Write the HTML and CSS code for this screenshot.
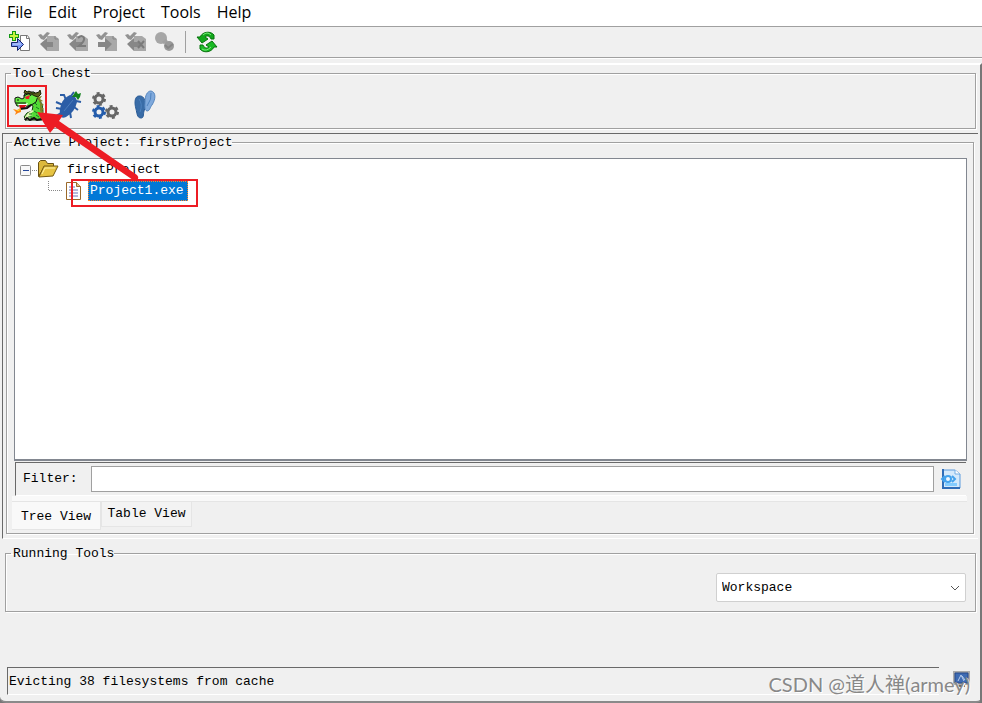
FILE: index.html
```html
<!DOCTYPE html>
<html lang="en">
<head>
    <meta charset="UTF-8" />
    <title>firstProject</title>
    <link rel="stylesheet" href="styles.css">
</head>
<body>
<div class="window">
    <nav class="menu">
        <a href="#">File</a>
        <a href="#">Edit</a>
        <a href="#">Project</a>
        <a href="#">Tools</a>
        <a href="#">Help</a>
    </nav>
    <div class="toolbar">
        <button type="button" aria-label="Import file">
            <svg width="22" height="22" viewBox="0 0 22 22">
                <path d="M11.500 4.500h7l2 3v12h-9z" fill="#fff" stroke="#777"/>
                <path d="M17.500 4.500v3h3" fill="none" stroke="#777"/>
                <path d="M2.500 11.500h6v-4l6 6-6 6v-4h-6z" fill="#7d9cf5" stroke="#14246e"/>
                <path d="M4 13h8" stroke="#c5d5ff"/>
                <path d="M3 0h4v3h3v4H7v3H3V7H0V3h3z" fill="#159a15"/>
                <path d="M4 1h2v3h3v2H6v3H4V6H1V4h3z" fill="#c9f23e"/>
            </svg>
        </button>
        <button type="button" disabled aria-label="Check out">
            <svg width="22" height="22" viewBox="0 0 22 22">
                <path d="M9 5h8l4 3v12H9z" fill="#a8a8a8"/>
                <path d="M17 5v3h3" fill="none" stroke="#868686"/>
                <path d="M2 13l7-6v4h6v5H9v4z" fill="#878787"/>
                <path d="M0 4l3-1 2 2 4-4 3 1-6 7-3-1z" fill="#929292"/>
            </svg>
        </button>
        <button type="button" disabled aria-label="Update">
            <svg width="22" height="22" viewBox="0 0 22 22">
                <path d="M9 5h8l4 3v12H9z" fill="#a8a8a8"/>
                <path d="M2 13l7-6v4h6v5H9v4z" fill="#878787"/>
                <path d="M0 4l3-1 2 2 4-4 3 1-6 7-3-1z" fill="#929292"/>
                <path d="M11 7q4-4 6 0 1 3-5 8h7" fill="none" stroke="#7b7b7b" stroke-width="2"/>
            </svg>
        </button>
        <button type="button" disabled aria-label="Check in">
            <svg width="22" height="22" viewBox="0 0 22 22">
                <path d="M9 5h8l4 3v12H9z" fill="#a8a8a8"/>
                <path d="M17 5v3h3" fill="none" stroke="#868686"/>
                <path d="M2 11h7V7l7 6-7 7v-4H2z" fill="#878787"/>
                <path d="M0 4l3-1 2 2 4-4 3 1-6 7-3-1z" fill="#929292"/>
            </svg>
        </button>
        <button type="button" disabled aria-label="Undo check out">
            <svg width="22" height="22" viewBox="0 0 22 22">
                <path d="M9 5h8l4 3v12H9z" fill="#a8a8a8"/>
                <path d="M2 13l7-6v4h6v5H9v4z" fill="#878787"/>
                <path d="M0 4l3-1 2 2 4-4 3 1-6 7-3-1z" fill="#929292"/>
                <path d="M13 10l6 7m0-7l-6 7" stroke="#7b7b7b" stroke-width="2"/>
            </svg>
        </button>
        <button type="button" disabled aria-label="Find check outs">
            <svg width="22" height="22" viewBox="0 0 22 22">
                <circle cx="7" cy="7" r="6" fill="#a6a6a6"/>
                <path d="M9 12l4-3" stroke="#a0a0a0" stroke-width="3"/>
                <circle cx="15" cy="15" r="5" fill="#999"/>
                <path d="M11 14l3 3 5-4" fill="none" stroke="#858585" stroke-width="2"/>
            </svg>
        </button>
        <span class="divider"></span>
        <button type="button" aria-label="Refresh">
            <svg width="22" height="22" viewBox="0 0 22 22">
                <path d="M4 6C7 0 15 0 18 4l0 4-3 0C14 5 11 4 9 6l3 2-6 4-5-6z" fill="#12a81c" stroke="#07730d"/>
                <path d="M18 16C15 22 7 22 4 18l0-4 3 0c1 3 4 4 6 2l-3-2 6-4 5 6z" fill="#19bb24" stroke="#07730d"/>
                <path d="M7 4q4-4 8 0M6 18q4 3 9-2" fill="none" stroke="#79ee7b"/>
            </svg>
        </button>
    </div>

    <div class="content">
        <fieldset class="group chest">
            <legend>Tool Chest</legend>
            <div class="tools">
                <button type="button" aria-label="CodeBrowser">
                    <svg width="32" height="32" viewBox="0 0 32 32">
                        <path d="M19 8l6 1 4 6 1 7-1 9H12v-2l-1-1 3-4 5-2 1-5-5-3z" fill="#52d936" stroke="#123b0c"/>
                        <path d="M2 9l3-1 4 2 2-1V6l4-3 6 0 4 4-2 6-3 2-5 2-6 2-2-2H4l-2-4z" fill="#63ec43" stroke="#111"/>
                        <path d="M11 4l1-3 2 2 2-1 3 2 4 0 3-1 1-2 1 4-3 3-3-1-4-2-4 0z" fill="#5c5f1b" stroke="#1d2208"/>
                        <path d="M24 8l5-1-2 3 3 2-3 1 4 3-3 1 3 3-2 1 2 4-4-3 0-8z" fill="#7d8429"/>
                        <path d="M5 15l7 0 3-1-2 4-6 1z" fill="#fff"/>
                        <path d="M6 16h8l-3 3-4 1z" fill="#d5101b"/>
                        <path d="M7 20l7-1 4-3" fill="none" stroke="#111" stroke-width="2"/>
                        <path d="M12 8l5-2-1 4-3 0z" fill="#ed1c24"/>
                        <path d="M11 7l5-3 2 3M4 11h2M3 14h5l5 0" fill="none" stroke="#111"/>
                        <path d="M15 24l4-3 2 1-4 3 3 1-4 1 2 2-3 2h-3v-3z" fill="#e6f5b9"/>
                        <path d="M16 25h3m-4 3h4M21 13l3 3M23 18l3 2M21 22l3 2M23 26l3 2" stroke="#16761e"/>
                        <path d="M12 31l2-2 3 2 4-2 3 2 5-1" fill="none" stroke="#111" stroke-width="2"/>
                        <path d="M8 19l-4 2-4-1 3 3-1 3 3-2 3-1z" fill="#ff8614"/>
                        <path d="M7 20l-4 2 3 0z" fill="#ffdd2c"/>
                    </svg>
                </button>
                <button type="button" aria-label="Debugger">
                    <svg width="32" height="32" viewBox="0 0 32 32">
                        <path d="M8 27C7 19 9 10 18 6q7 1 7 7-2 10-11 15-4 2-6-1z" fill="#2b5da6"/>
                        <path d="M14 11L12 6 8 6M11 16L4 13M10 20l-6-1M9 24l-5 3M19 7l3-4M24 12l5 1M22 18l4 3M18 23l1 6" fill="none" stroke="#2b5da6" stroke-width="2"/>
                        <path d="M12 22l9-11" stroke="#4a7bbb"/>
                        <path d="M24 2l2 3 3-1-1 4-2 3-2-3-4 0 2-3z" fill="#11811d"/>
                    </svg>
                </button>
                <button type="button" aria-label="Emulator">
                    <svg width="32" height="32" viewBox="0 0 32 32">
                        <g fill="none" stroke="#666">
                            <circle cx="8" cy="10" r="4" stroke-width="3"/>
                            <circle cx="8" cy="10" r="6" stroke-width="2" stroke-dasharray="3 3.280"/>
                            <circle cx="21" cy="23" r="4" stroke-width="3"/>
                            <circle cx="21" cy="23" r="6" stroke-width="2" stroke-dasharray="3 3.280"/>
                        </g>
                        <g fill="none" stroke="#245cab">
                            <circle cx="8" cy="23" r="4" stroke-width="3"/>
                            <circle cx="8" cy="23" r="6" stroke-width="2" stroke-dasharray="3 3.280"/>
                        </g>
                    </svg>
                </button>
                <button type="button" aria-label="Version Tracking">
                    <svg width="32" height="32" viewBox="0 0 32 32">
                        <path d="M9 7c6-1 8 8 5 15-1 4 0 7-3 7-4 0-4-5-5-9C4 13 5 7 9 7z" fill="#396ca7" stroke="#285a96"/>
                        <path d="M21 2c5 1 5 8 1 14-2 2-2 6-5 6-3-1-2-6-2-9 0-6 2-11 6-11z" fill="#7fa9dc" stroke="#5586bf"/>
                        <path d="M9 10q4 5 1 13M21 4q1 6-4 13" fill="none" stroke="#4d82bf"/>
                    </svg>
                </button>
            </div>
        </fieldset>

        <div class="project">
            <fieldset class="group active">
                <legend>Active Project: firstProject</legend>
                <div class="tree">
                    <ul>
                        <li class="root">
                            <svg width="50" height="22" viewBox="0 0 50 22">
                                <rect x="5.500" y="6.500" width="10" height="10" rx="1" fill="#f8f8f8" stroke="#8b8b8b"/>
                                <path d="M8 11.500h6" stroke="#26489b"/>
                                <path d="M17 11.500h6" stroke="#888" stroke-dasharray="1 1"/>
                                <path d="M23.500 17.500v-14l2-2h5l2 3h6v3h-9z" fill="#ddb93c" stroke="#6a5213"/>
                                <path d="M24 18l5-11h14l-5 10z" fill="#e7c443" stroke="#755b12"/>
                                <path d="M27 15l3-6h10" fill="none" stroke="#fff2a5"/>
                            </svg>
                            <span>firstProject</span>
                        </li>
                        <li class="leaf">
                            <svg width="38" height="20" viewBox="0 0 38 20">
                                <path d="M.500 0v9.500H14" fill="none" stroke="#888" stroke-dasharray="1 1"/>
                                <path d="M18.500 1.500h10l4 4v13h-14z" fill="#fff" stroke="#9a692a"/>
                                <path d="M28.500 1.500v4h4" fill="#e3c18b" stroke="#9a692a"/>
                                <path d="M21 6h6m-6 3h9m-9 3h9m-9 3h9" stroke="#6c75b7"/>
                            </svg>
                            <span class="selected">Project1.exe</span>
                        </li>
                    </ul>
                </div>
                <div class="filter">
                    <label for="filter">Filter:</label>
                    <input type="text" id="filter" />
                    <button type="button" aria-label="Filter options">
                        <svg width="22" height="22" viewBox="0 0 22 22">
                            <path d="M3 2h12l5 4v14H3z" fill="#d4e9fb" stroke="#5c9bdd"/>
                            <path d="M3 1v19h17" fill="none" stroke="#2f6db8" stroke-width="2"/>
                            <path d="M15 2v4h5" fill="#fff" stroke="#73aee5"/>
                            <path d="M5 15h12v3H5z" fill="#83ccff"/>
                            <path d="M5 8l-3 3 3 3M12 8l3 3-3 3" fill="none" stroke="#44a2ec" stroke-width="2"/>
                            <circle cx="8" cy="11" r="3" fill="#eef7ff" stroke="#44a2ec" stroke-width="2"/>
                        </svg>
                    </button>
                </div>
                <div class="pane-edge"></div>
                <div class="tabs">
                    <button type="button" class="current">Tree View</button>
                    <button type="button">Table View</button>
                </div>
            </fieldset>
        </div>

        <fieldset class="group running">
            <legend>Running Tools</legend>
            <div class="workspace">
                <select aria-label="Workspace">
                    <option>Workspace</option>
                </select>
                <svg class="chevron" width="10" height="6" viewBox="0 0 10 6">
                    <path d="M1 1l4 4 4-4" fill="none" stroke="#555"/>
                </svg>
            </div>
        </fieldset>

        <div class="status">
            <div class="message">Evicting 38 filesystems from cache</div>
            <button type="button" aria-label="Console">
                <svg width="17" height="17" viewBox="0 0 17 17">
                    <path d="M0 0h17v14H0z" fill="#aaa"/>
                    <path d="M2 2h13v10H2z" fill="#3e6bb3" stroke="#24498b"/>
                    <path d="M5 10l3-6 3 6M9 5l3 4" fill="none" stroke="#b9cdeb"/>
                    <path d="M5 14h7v2H5z" fill="#666"/>
                </svg>
            </button>
        </div>
    </div>

    <!-- red marks drawn over the window -->
    <svg class="marks" width="210" height="220" viewBox="0 0 210 220">
        <rect x="8" y="86" width="38" height="40" fill="none" stroke="#ed1c24" stroke-width="2"/>
        <rect x="72" y="180" width="125" height="26" fill="none" stroke="#ed1c24" stroke-width="2"/>
        <path d="M37 112l26 3-4 6 78 54q2 2 1 4-2 2-5 1L55 127l-5 6z" fill="#ed1c24"/>
    </svg>
    <div class="watermark">CSDN @道人禅(armey)</div>
</div>
</body>
</html>
```

FILE: styles.css
```css
*{
    box-sizing: border-box;
    margin: 0;
    padding: 0;
}
body{
    background-color: #777;
    color: #000;
    font: 13px/16px "Liberation Mono", "Noto Sans CJK SC", monospace;
}
button, input, select{
    font: inherit;
    color: inherit;
}
button{
    border: 0;
    background: none;
}
svg{
    display: block;
}
ul{
    list-style: none;
}
.window{
    position: relative;
    display: flex;
    flex-direction: column;
    min-height: 100vh;
    background-color: #f0f0f0;
    border-bottom: 2px solid #8a8a8a;
    border-radius: 0 0 6px 6px;
}
.menu{
    display: flex;
    gap: 16px;
    height: 27px;
    padding-left: 7px;
    background-color: #fff;
    border-bottom: 1px solid #a0a0a0;
    font: 16px/25px "Open Sans", "Noto Sans", sans-serif;
}
.menu a{
    color: #000;
    text-decoration: none;
}
.toolbar{
    display: flex;
    align-items: center;
    gap: 7px;
    height: 31px;
    padding-left: 9px;
    border-bottom: 1px solid #a0a0a0;
    box-shadow: 0 1px 0 #fff;
}
.divider{
    width: 1px;
    height: 22px;
    margin: 0 3px 0 2px;
    background-color: #a0a0a0;
}
.content{
    flex: 1;
    display: flex;
    flex-direction: column;
    margin-top: 5px;
    padding: 0 2px;
    border-top: 2px solid #fff;
    border-right: 2px solid #777;
}
.group{
    min-width: 0;
    border: 1px solid #a0a0a0;
    box-shadow: 1px 1px 0 #fff, inset 1px 1px 0 #fff;
}
.group legend{
    margin-left: 5px;
    padding: 2px 0 0 2px;
    line-height: 14px;
}
.chest{
    height: 64px;
    margin: 0 2px 0 3px;
}
.tools{
    display: flex;
    gap: 7px;
    padding: 8px 0 0 7px;
}
.project{
    flex: 1;
    display: flex;
    margin-top: 4px;
    padding: 0 4px 4px 3px;
    border: solid #696969;
    border-width: 1px 0 0 1px;
    border-bottom: 1px solid #fff;
}
.active{
    flex: 1;
    display: flex;
    flex-direction: column;
    padding: 8px 6px 3px 5px;
}
.active legend{
    margin-left: 0;
}
.tree{
    flex: 1;
    margin-left: 2px;
    background-color: #fff;
    border: 1px solid #828790;
    border-bottom-width: 2px;
}
.root, .leaf{
    display: flex;
    align-items: center;
}
.root{
    height: 22px;
    gap: 2px;
}
.leaf{
    height: 20px;
    padding-left: 33px;
}
.selected{
    margin-left: 2px;
    padding: 1px 4px 1px 2px;
    line-height: 18px;
    background-color: #0078d7;
    outline: 1px dotted #ff8728;
    outline-offset: -1px;
    color: #fff;
}
.filter{
    display: flex;
    align-items: center;
    height: 34px;
    margin: 1px 1px 0 3px;
    padding: 0 4px 0 7px;
    border: solid #696969;
    border-width: 1px 0 0 1px;
    border-bottom: 1px solid #fff;
}
.filter label{
    width: 68px;
}
.filter input{
    flex: 1;
    min-width: 0;
    height: 26px;
    margin-right: 6px;
    padding: 0 4px;
    background-color: #fff;
    border: 1px solid #a0a0a0;
}
.pane-edge{
    height: 6px;
    background-color: #f9f9f9;
    border-bottom: 1px solid #e5e5e5;
}
.tabs{
    display: flex;
    align-items: flex-start;
    height: 28px;
}
.tabs button{
    width: 91px;
    height: 25px;
    border: 1px solid #e5e5e5;
    border-top: 0;
    background-color: #f3f3f3;
}
.tabs .current{
    width: 89px;
    height: 28px;
    padding-top: 3px;
    border-left: 0;
    background-color: #f9f9f9;
}
.running{
    height: 67px;
    margin: 6px 2px 0 3px;
}
.workspace{
    position: relative;
    width: 250px;
    margin: 12px 9px 0 auto;
}
.workspace select{
    display: block;
    width: 100%;
    height: 29px;
    padding: 0 24px 0 5px;
    appearance: none;
    background-color: #fff;
    border: 1px solid #d0d0d0;
    border-radius: 2px;
}
.chevron{
    position: absolute;
    top: 12px;
    right: 6px;
    pointer-events: none;
}
.status{
    display: flex;
    align-items: flex-start;
    gap: 14px;
    margin: 55px 8px 6px 5px;
}
.message{
    flex: 1;
    height: 28px;
    padding: 6px 1px;
    border: solid #696969;
    border-width: 1px 0 0 1px;
    border-bottom: 1px solid #fff;
}
.status button{
    padding-top: 4px;
}
.marks{
    position: absolute;
    top: 0;
    left: 0;
    pointer-events: none;
}
.watermark{
    position: absolute;
    right: 12px;
    bottom: 5px;
    color: #888;
    font: 20px/24px Lato, "Noto Sans CJK SC", sans-serif;
    text-shadow: 1px 1px 0 #fff;
    pointer-events: none;
}
```
